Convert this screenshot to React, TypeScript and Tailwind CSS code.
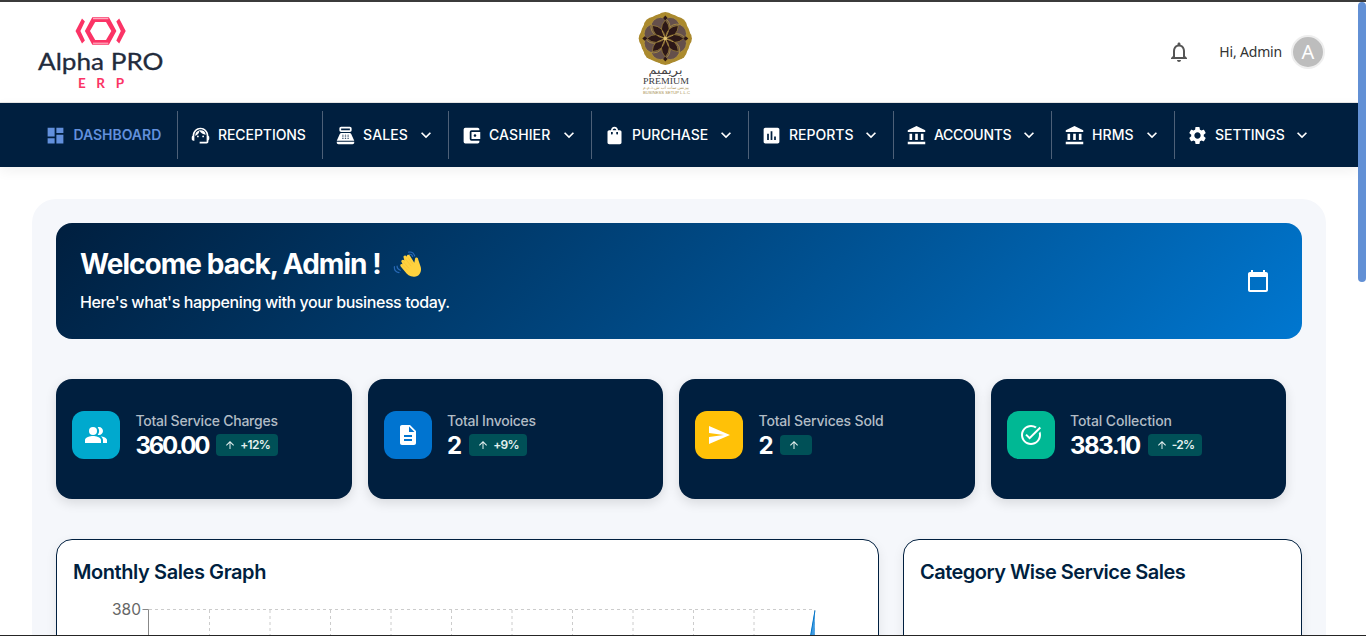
import React from "react";
import {
  MdDashboard, MdSupportAgent, MdPointOfSale, MdAccountBalanceWallet, MdShoppingBag,
  MdInsertChart, MdAccountBalance, MdSettings, MdKeyboardArrowDown, MdNotificationsNone,
  MdCalendarToday, MdPeopleAlt, MdDescription, MdSend, MdTaskAlt, MdArrowUpward,
} from "react-icons/md";
import type { IconType } from "react-icons";

function AlphaLogo() {
  return (
    <svg width="130" height="80" viewBox="36 14 130 80" aria-label="Alpha PRO ERP">
      <g fill="#fb3466">
        <path d="M82 18.500 L75.500 31 L82 43.500 L84.900 40.600 L80.400 31 L84.900 21.600Z" />
        <path d="M119.200 18.500 L125.700 31 L119.200 43.500 L116.300 40.600 L120.800 31 L116.300 21.600Z" />
        <path fillRule="evenodd" d="M92.300 17.200H108.900L116.400 31L108.900 44.800H92.300L84.900 31ZM95.200 22L90 31L95.200 40H106L111.300 31L106 22Z" />
      </g>
      <path d="M93 18.700H108.300M93 43.200H108.300" stroke="#ffc5d3" strokeWidth="1" />
      <text x="38" y="70" textLength="125.500" lengthAdjust="spacingAndGlyphs" fontFamily="Lato, sans-serif" fontSize="23.5" fontWeight="400" fill="#222b3c" stroke="#222b3c" strokeWidth=".3">Alpha PRO</text>
      <text x="78" y="88" textLength="46" fontFamily="Lato, sans-serif" fontSize="13.5" fontWeight="700" fill="#fb3466">ERP</text>
    </svg>
  );
}

const TURNS = [0, 45, 90, 135, 180, 225, 270, 315];

function PremiumLogo() {
  return (
    <svg width="60" height="86" viewBox="635 10 60 86" aria-label="Premium Business Setup">
      <circle cx="665.3" cy="38.5" r="25.3" fill="#ab8a2e" />
      {TURNS.map((a) => (
        <circle key={a} cx="665.3" cy="21.500" r="9.6" fill="#ab8a2e" transform={`rotate(${a} 665.3 38.5)`} />
      ))}
      {TURNS.map((a) => (
        <circle key={a} cx="665.3" cy="26" r="9.6" fill="#65504b" stroke="#b39641" strokeWidth=".7" transform={`rotate(${a + 22.5} 665.3 38.5)`} />
      ))}
      {TURNS.map((a) => (
        <g key={a} transform={`rotate(${a} 665.3 38.5)`}>
          <path d="M665.3 38.5Q657.500 29 665.3 20Q673.100 29 665.3 38.5Z" fill="#2c1717" stroke="#ad903e" strokeWidth=".6" />
          {a % 90 === 0 && <path d="M665.3 15.500L667.500 18L665.300 20.500L663.100 18Z" fill="#2c1717" />}
        </g>
      ))}
      {TURNS.map((a) => (
        <path key={a} d="M665.3 38.5V30" stroke="#c5a654" strokeWidth=".7" transform={`rotate(${a + 22.5} 665.3 38.5)`} />
      ))}
      <circle cx="665.3" cy="38.5" r="1.8" fill="#e3c371" />
      <text x="665.5" y="74" textAnchor="middle" textLength="34" lengthAdjust="spacingAndGlyphs" fontFamily="DejaVu Sans, sans-serif" fontSize="11.500" fill="#444">بريميم</text>
      <text x="643" y="83.700" textLength="46" lengthAdjust="spacingAndGlyphs" fontFamily="Liberation Serif, serif" fontSize="9" fill="#38383c">PREMIUM</text>
      <text x="666" y="88.800" textAnchor="middle" textLength="46" lengthAdjust="spacingAndGlyphs" fontFamily="DejaVu Sans, sans-serif" fontSize="4.500" fill="#b39a5a">بيزنس سات اب ش.ذ.م.م</text>
      <text x="643" y="94" textLength="47" lengthAdjust="spacingAndGlyphs" fontFamily="Liberation Sans, sans-serif" fontSize="4" fill="#a89152">BUSINESS SETUP L.L.C</text>
    </svg>
  );
}

function WavingHand() {
  return (
    <svg width="30" height="30" viewBox="0 0 30 30" aria-hidden="true">
      <path d="M8.500 13C7.500 11 10.200 9.700 11.400 11.500L10.600 8.800C9.900 6.700 12.600 5.700 13.700 7.700C13.700 5.400 16.200 5.100 17.100 7L21.300 13.700L22 10.100C22.400 7.800 25.300 8.300 25.200 10.600L27.800 18.200C29 23.500 25.600 27.700 21.300 27.800C17 28 14 25.800 11.900 22.600L7.700 17.500C6.400 15.700 8.200 14.200 9.700 15.400Z" fill="#ffd23e" />
      <path d="M10 12.500L15.800 19.200M12.200 9.700L18 16.900M15 8.500L19.800 15.100M9.400 15.900L14.200 20.900" stroke="#f6bd32" strokeWidth=".6" fill="none" strokeLinecap="round" />
      <path d="M15.700 3.100Q20.200 2.300 21.700 7M16.500 5.300Q18.900 5 19.700 7.500M1.400 17.700Q1 22.600 6 23.700M4.100 17.200Q3.900 20 7.300 21.200" fill="none" stroke="#2869b6" strokeWidth="1.200" strokeLinecap="round" />
    </svg>
  );
}

type NavEntry = { label: string; icon: IconType; width: string; track: string; menu?: boolean; active?: boolean };

const NAV: NavEntry[] = [
  { label: "DASHBOARD", icon: MdDashboard, width: "w-[144px]", track: "tracking-[-0.02px]", active: true },
  { label: "RECEPTIONS", icon: MdSupportAgent, width: "w-[145px]", track: "tracking-[-0.07px]" },
  { label: "SALES", icon: MdPointOfSale, width: "w-[126px]", track: "tracking-[0.15px]", menu: true },
  { label: "CASHIER", icon: MdAccountBalanceWallet, width: "w-[143px]", track: "tracking-[0.1px]", menu: true },
  { label: "PURCHASE", icon: MdShoppingBag, width: "w-[157px]", track: "tracking-[-0.05px]", menu: true },
  { label: "REPORTS", icon: MdInsertChart, width: "w-[145px]", track: "tracking-normal", menu: true },
  { label: "ACCOUNTS", icon: MdAccountBalance, width: "w-[158px]", track: "tracking-[-0.33px]", menu: true },
  { label: "HRMS", icon: MdAccountBalance, width: "w-[123px]", track: "tracking-[0.1px]", menu: true },
  { label: "SETTINGS", icon: MdSettings, width: "w-[149px]", track: "tracking-normal", menu: true },
];

type Stat = { label: string; value: string; change: string; icon: IconType; tile: string; track: string; labelTrack: string };

const STATS: Stat[] = [
  { label: "Total Service Charges", value: "360.00", change: "+12%", icon: MdPeopleAlt, tile: "bg-[#00a9ce]", track: "tracking-[-2.25px]", labelTrack: "tracking-[-0.24px]" },
  { label: "Total Invoices", value: "2", change: "+9%", icon: MdDescription, tile: "bg-[#0074d0]", track: "tracking-[-1px]", labelTrack: "tracking-[-0.24px]" },
  { label: "Total Services Sold", value: "2", change: "", icon: MdSend, tile: "bg-[#ffc107]", track: "tracking-[-1.5px]", labelTrack: "tracking-[-0.17px]" },
  { label: "Total Collection", value: "383.10", change: "-2%", icon: MdTaskAlt, tile: "bg-[#00b894]", track: "tracking-[-1.45px]", labelTrack: "tracking-[-0.12px]" },
];

function StatCard({ stat }: { stat: Stat }) {
  const Icon = stat.icon;
  return (
    <div className="flex h-[120px] gap-[15.5px] rounded-2xl bg-[#001f3f] px-4 pt-8 shadow-[0_4px_12px_rgba(0,0,0,0.12)]">
      <div className={`flex size-12 shrink-0 items-center justify-center rounded-xl text-white ${stat.tile}`}>
        <Icon size={24} />
      </div>
      <div>
        <div className={`h-[23px] whitespace-nowrap text-sm font-medium leading-5 text-[#b2bcc5] ${stat.labelTrack}`}>{stat.label}</div>
        <div className="flex h-[22px] items-center gap-2">
          <span className={`pt-px text-2xl font-bold leading-[22px] text-white ${stat.track}`}>{stat.value}</span>
          <span className={`flex items-center rounded bg-[#005057] px-2 text-xs font-semibold tracking-[-0.75px] text-[#e4f0ef] ${stat.change ? "h-[22px]" : "h-5"}`}>
            <MdArrowUpward size={12} className="mr-1" />
            {stat.change}
          </span>
        </div>
      </div>
    </div>
  );
}

const GRID_LINES = Array.from({ length: 11 }, (_, i) => 149 + (i + 1) * 60.5);

export default function App() {
  return (
    <div className="flex h-[636px] w-[1366px] flex-col overflow-hidden border-b border-t-2 border-b-[#252525] border-t-[#3b3b3b] bg-white font-['Inter',sans-serif]">
      <div className="flex min-h-0 flex-1">
        <div className="flex w-[1358px] flex-col overflow-hidden">
          <header className="grid h-[101px] shrink-0 grid-cols-[1fr_60px_1fr] border-b border-[#e7e7e7]">
            <div className="pl-9 pt-3"><AlphaLogo /></div>
            <div className="-ml-[14px] pt-2"><PremiumLogo /></div>
            <div className="flex h-[100px] items-center justify-end pr-[33px]">
              <MdNotificationsNone size={24} className="mr-7 text-[#555]" />
              <span className="mr-[9px] font-['Noto_Sans',sans-serif] text-sm tracking-[-0.18px] text-[#333]">Hi, Admin</span>
              <span className="flex size-[34px] items-center justify-center rounded-full border-2 border-[#eee] bg-[#bdbdbd] font-['Noto_Sans',sans-serif] text-xl text-white">A</span>
            </div>
          </header>

          <nav className="flex h-16 shrink-0 items-center bg-[#001f3f] pl-[34px] shadow-[0_4px_12px_rgba(0,0,0,0.06)]">
            {NAV.map(({ label, icon: Icon, width, track, menu, active }) => (
              <a key={label} className={`flex h-12 shrink-0 items-center border-r border-[#4d6078] pr-3 text-sm last:border-r-0 ${width} ${active ? "pl-[11.4px] font-semibold text-[#6290dc]" : "pl-3 font-medium text-white"}`}>
                <Icon size={21} className="mr-[7px] shrink-0" />
                <span className={track}>{label}</span>
                {menu && <MdKeyboardArrowDown size={20} className="ml-auto shrink-0" />}
              </a>
            ))}
          </nav>

          <main className="mx-8 mt-8 flex-1 shrink-0 rounded-t-3xl bg-[#f5f7fb] px-6 pt-6">
            <section className="flex h-[116px] justify-between rounded-2xl bg-linear-135 from-[#001f3f] to-[#0077d0] px-6 text-white">
              <div className="pt-[26px]">
                <h1 className="flex h-[30px] items-center text-[28px] font-bold leading-[30px] tracking-[-0.97px]">
                  Welcome back, Admin !
                  <span className="ml-[12px]"><WavingHand /></span>
                </h1>
                <p className="mt-[11px] text-base font-[450] leading-6 tracking-[-0.41px]">Here's what's happening with your business today.</p>
              </div>
              <MdCalendarToday size={24} className="mr-2 mt-[46px]" />
            </section>

            <section className="mt-10 grid grid-cols-4 gap-4 pr-4">
              {STATS.map((stat) => <StatCard key={stat.label} stat={stat} />)}
            </section>

            <section className="mt-10 flex gap-6">
              <div className="h-[420px] w-[823px] rounded-2xl border border-[#001f3f] bg-white px-4 pt-[17px] shadow-[0_4px_12px_rgba(0,0,0,0.08)]">
                <h2 className="text-xl font-semibold leading-[30px] tracking-[-0.42px] text-[#001f3f]">Monthly Sales Graph</h2>
                <svg width="770" height="330" viewBox="73 587 770 330" aria-label="Monthly sales">
                  <text x="141" y="615" textAnchor="end" fontFamily="Inter" fontSize="15.500" fill="#666">380</text>
                  <path d="M142.500 609.500H148.500V880" fill="none" stroke="#888" />
                  <path d="M149 609.500H815" stroke="#ccc" strokeDasharray="3 3" />
                  {GRID_LINES.map((x) => <path key={x} d={`M${x} 610V880`} stroke="#ccc" strokeDasharray="3 3" />)}
                  <path d="M814.800 610L810.500 636L770 880H815.500Z" fill="#409ce2" />
                  <path d="M815 610.500L810.500 636L770 880" fill="none" stroke="#0074c8" strokeWidth="1" />
                </svg>
              </div>
              <div className="h-[420px] w-[399px] rounded-2xl border border-[#001f3f] bg-white px-4 pt-[17px] shadow-[0_4px_12px_rgba(0,0,0,0.08)]">
                <h2 className="text-xl font-semibold leading-[30px] tracking-[-0.52px] text-[#001f3f]">Category Wise Service Sales</h2>
              </div>
            </section>
          </main>
        </div>
        <div className="w-2"><div className="h-[280px] rounded-full bg-[#6290d5]" /></div>
      </div>
    </div>
  );
}
